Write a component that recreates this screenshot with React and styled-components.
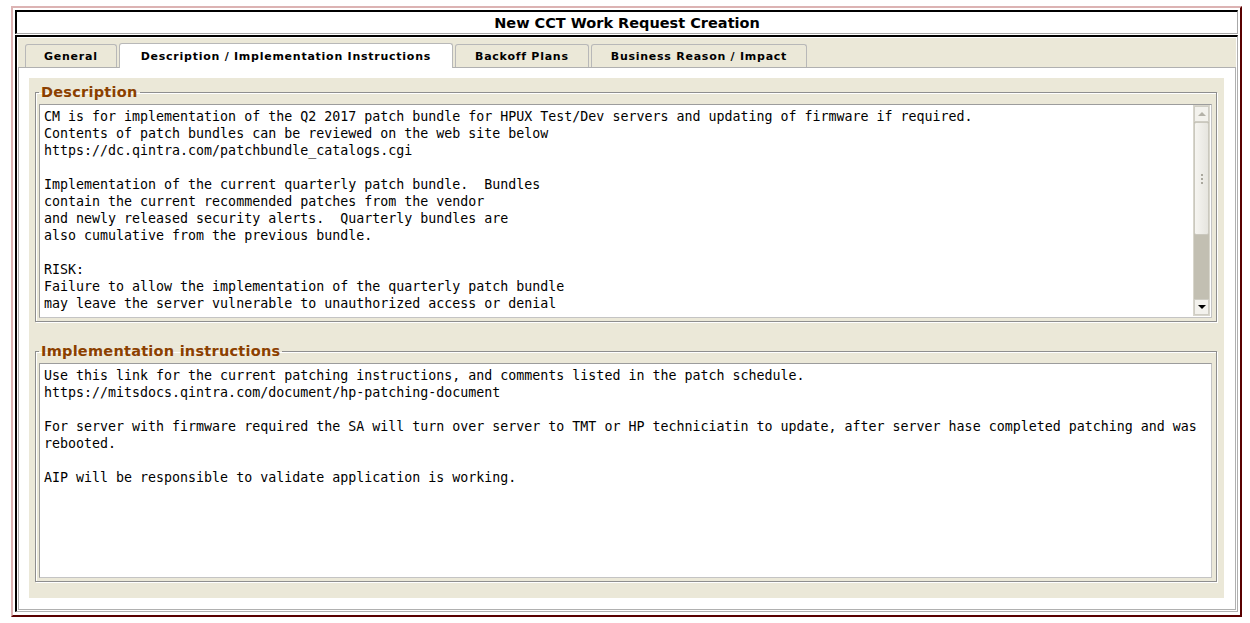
import React from 'react'
import styled, { createGlobalStyle } from 'styled-components'

const GlobalStyle = createGlobalStyle`
  body {
    margin: 0;
    background: #fff;
    font-family: "DejaVu Sans", Verdana, sans-serif;
  }
`

const descriptionText = `CM is for implementation of the Q2 2017 patch bundle for HPUX Test/Dev servers and updating of firmware if required.
Contents of patch bundles can be reviewed on the web site below
https://dc.qintra.com/patchbundle_catalogs.cgi

Implementation of the current quarterly patch bundle.  Bundles
contain the current recommended patches from the vendor
and newly released security alerts.  Quarterly bundles are
also cumulative from the previous bundle.

RISK:
Failure to allow the implementation of the quarterly patch bundle
may leave the server vulnerable to unauthorized access or denial`

const instructionsText = `Use this link for the current patching instructions, and comments listed in the patch schedule.
https://mitsdocs.qintra.com/document/hp-patching-document

For server with firmware required the SA will turn over server to TMT or HP techniciatin to update, after server hase completed patching and was rebooted.

AIP will be responsible to validate application is working.`

const tabs = [
  'General',
  'Description / Implementation Instructions',
  'Backoff Plans',
  'Business Reason / Impact',
]

const App = () => {
  return (
    <>
      <GlobalStyle />
      <Frame>
        <TitleBar>New CCT Work Request Creation</TitleBar>
        <Container>
          <TabStrip>
            {tabs.map((t, i) => (
              <Tab key={t} $active={i === 1} $pad={i === 0 ? 18 : i === 1 ? 21 : 19}>{t}</Tab>
            ))}
          </TabStrip>
          <Panel>
            <FormArea>
              <Group>
                <Legend>Description</Legend>
                <TextBox $height={214}>
                  <TextBody>{descriptionText}</TextBody>
                  <ScrollBar>
                    <ScrollButton>
                      <Arrow $up $disabled />
                    </ScrollButton>
                    <Thumb>
                      <Grip />
                      <Grip />
                      <Grip />
                    </Thumb>
                    <Track />
                    <ScrollButton>
                      <Arrow />
                    </ScrollButton>
                  </ScrollBar>
                </TextBox>
              </Group>
              <Group>
                <Legend>Implementation instructions</Legend>
                <TextBox $height={215}>
                  <TextBody>{instructionsText}</TextBody>
                </TextBox>
              </Group>
            </FormArea>
          </Panel>
        </Container>
      </Frame>
    </>
  )
}

export default App

const Frame = styled.div`
  margin: 6px 0 0 11px;
  width: 1231px;
  box-sizing: border-box;
  border: 2px solid;
  border-color: #dcb3b3 #5a0000 #5a0000 #dcb3b3;
  padding: 2px 2px 3px 2px;
  display: flex;
  flex-direction: column;
  gap: 1px;
`

const TitleBar = styled.div`
  height: 24px;
  box-sizing: border-box;
  border: 2px solid;
  border-width: 2px 1px 1px 2px;
  border-color: #000 #a8a8a8 #a8a8a8 #000;
  padding-top: 1px;
  text-align: center;
  font-weight: bold;
  font-size: 14.5px;
  line-height: 20px;
  color: #000;
`

const Container = styled.div`
  height: 577px;
  box-sizing: border-box;
  border: solid;
  border-width: 2px 1px 1px 2px;
  border-color: #000 #b0b0b0 #b0b0b0 #000;
  padding: 1px;
  display: flex;
  flex-direction: column;
`

const TabStrip = styled.div`
  height: 29px;
  background: #ebe8d8;
  border-bottom: 1px solid #b0b0b0;
  display: flex;
  align-items: flex-end;
  gap: 2px;
  padding-left: 7px;
`

const Tab = styled.div`
  height: ${p => (p.$active ? 25 : 23)}px;
  margin-bottom: ${p => (p.$active ? -1 : 0)}px;
  box-sizing: border-box;
  padding: 0 ${p => p.$pad}px;
  border: 1px solid #b8b8b8;
  border-bottom: none;
  border-radius: 3px 3px 0 0;
  background: ${p => (p.$active ? '#fff' : '#ebe8d8')};
  font-size: 11px;
  font-weight: bold;
  letter-spacing: 0.75px;
  line-height: ${p => (p.$active ? 26 : 24)}px;
  color: #000;
  white-space: nowrap;
`

const Panel = styled.div`
  flex: 1;
  background: #fff;
  border: 1px solid #b0b0b0;
  border-top: none;
  padding: 10px 11px 11px 10px;
  display: flex;
  flex-direction: column;
`

const FormArea = styled.div`
  flex: 1;
  background: #ebe8d8;
  padding: 6px 7px 0 6px;
  display: flex;
  flex-direction: column;
  gap: 21px;
`

const Group = styled.fieldset`
  margin: 0;
  padding: 3px 4px 3px 3px;
  border: 1px solid #8e8e8e;
  box-shadow: inset 1px 1px 0 #fff, 1px 1px 0 #fff;
  min-width: 0;
`

const Legend = styled.legend`
  padding: 0 2px;
  font-size: 14.5px;
  line-height: 17px;
  font-weight: bold;
  letter-spacing: 0.25px;
  color: #8b4000;
`

const TextBox = styled.div`
  height: ${p => p.$height}px;
  box-sizing: border-box;
  background: #fff;
  border: 1px solid;
  border-color: #9c9c9c #c4c4c4 #c4c4c4 #9c9c9c;
  display: flex;
  padding-right: 1px;
  overflow: hidden;
`

const TextBody = styled.div`
  flex: 1;
  padding: 3px 4px;
  white-space: pre-wrap;
  font-family: "DejaVu Sans Mono", monospace;
  font-size: 13.3px;
  line-height: 17px;
  color: #000;
  overflow: hidden;
`

const ScrollBar = styled.div`
  width: 17px;
  margin-bottom: 1px;
  display: flex;
  flex-direction: column;
  background: #c2bfb2;
  border: 1px solid #d8d6cc;
  box-sizing: border-box;
`

const ScrollButton = styled.div`
  height: 16px;
  box-sizing: border-box;
  background: #f3f2ed;
  border: 1px solid #cfcdc4;
  display: flex;
  align-items: center;
  justify-content: center;
`

const Arrow = styled.div`
  width: 0;
  height: 0;
  border-left: 4px solid transparent;
  border-right: 4px solid transparent;
  ${p =>
    p.$up
      ? `border-bottom: 4px solid ${p.$disabled ? '#b4b2a8' : '#000'};`
      : `border-top: 4px solid #000;`}
`

const Thumb = styled.div`
  height: 113px;
  box-sizing: border-box;
  background: linear-gradient(to right, #f6f5f1, #e6e5df);
  border: 1px solid #cac8be;
  border-radius: 2px;
  display: flex;
  flex-direction: column;
  align-items: center;
  justify-content: center;
  gap: 2px;
`

const Grip = styled.div`
  width: 2px;
  height: 2px;
  background: #a9a79d;
`

const Track = styled.div`
  flex: 1;
`
